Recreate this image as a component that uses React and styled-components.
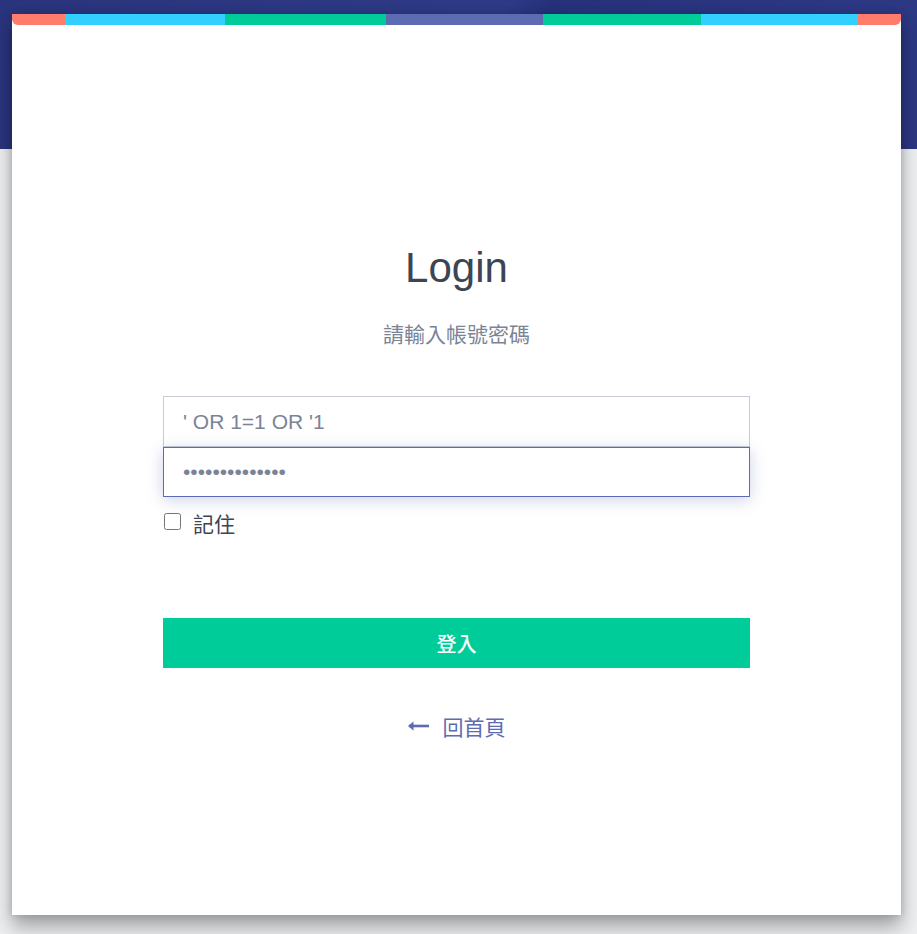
import React, { useState } from "react";
import styled, { createGlobalStyle } from "styled-components";

const GlobalStyle = createGlobalStyle`
  html, body {
    margin: 0;
    padding: 0;
    background: #eeeff1;
    font-family: "Liberation Sans", "Noto Sans CJK TC", Arial, sans-serif;
  }
`;

const Page = styled.div`
  position: relative;
  min-height: 934px;
  padding: 14px 16px 19px 12px;
  box-sizing: border-box;
  background:
    linear-gradient(
      to bottom,
      transparent 149px,
      #eeeff1 149px
    ),
    linear-gradient(
      120deg,
      #2a347c 0%,
      #2e3a86 35%,
      #27317a 38%,
      #2d3884 60%,
      #29337d 100%
    );
`;

const Card = styled.div`
  width: 889px;
  height: 901px;
  background: #fff;
  box-shadow: 0 12px 18px rgba(0, 0, 0, 0.32), 0 0 8px rgba(0, 0, 0, 0.15);
  display: flex;
  flex-direction: column;
  align-items: center;
`;

const ColorBar = styled.div`
  width: 100%;
  height: 11px;
  display: flex;
  border-radius: 0 0 6px 6px;
  overflow: hidden;
`;

const Segment = styled.div`
  width: ${(p) => p.w}px;
  background: ${(p) => p.color};
`;

const Title = styled.h1`
  margin: 220px 0 0;
  font-size: 42px;
  line-height: 46px;
  font-weight: 400;
  color: #3d4454;
`;

const Subtitle = styled.p`
  margin: 28px 0 0;
  font-family: "Noto Sans CJK TC", sans-serif;
  font-size: 21px;
  line-height: 28px;
  color: #7a8496;
`;

const Form = styled.form`
  width: 587px;
  margin-top: 49px;
  display: flex;
  flex-direction: column;
`;

const Input = styled.input`
  box-sizing: border-box;
  width: 100%;
  height: ${(p) => (p.focused ? 50 : 51)}px;
  padding: 0 19px;
  font-family: "Liberation Sans", Arial, sans-serif;
  font-size: 21px;
  color: #7a8496;
  background: #fff;
  outline: none;
  border: 1px solid ${(p) => (p.focused ? "#5d6bb3" : "#c7cbd3")};
  box-shadow: ${(p) =>
    p.focused ? "0 3px 16px rgba(93, 107, 179, 0.3)" : "none"};
  position: relative;
  z-index: ${(p) => (p.focused ? 1 : 0)};
`;

const RememberRow = styled.label`
  display: flex;
  align-items: center;
  gap: 12px;
  margin-top: 11px;
  font-family: "Noto Sans CJK TC", sans-serif;
  font-size: 21px;
  color: #3d4454;
`;

const CheckBox = styled.input`
  margin: 0 0 4px 1px;
  width: 17px;
  height: 17px;
`;

const SubmitButton = styled.button`
  margin-top: 80px;
  height: 50px;
  border: none;
  background: #00cc99;
  color: #fff;
  font-family: "Noto Sans CJK TC", sans-serif;
  font-size: 20px;
  font-weight: 500;
  cursor: pointer;
`;

const BackLink = styled.a`
  margin-top: 43px;
  display: flex;
  align-items: center;
  gap: 14px;
  color: #5d6bb3;
  text-decoration: none;
  font-family: "Noto Sans CJK TC", sans-serif;
  font-size: 21px;
`;

const segments = [
  { w: 53, color: "#ff7b6b" },
  { w: 160, color: "#33d0ff" },
  { w: 161, color: "#00cc99" },
  { w: 157, color: "#5d6bb3" },
  { w: 158, color: "#00cc99" },
  { w: 157, color: "#33d0ff" },
  { w: 43, color: "#ff7b6b" },
];

const App = () => {
  const [account, setAccount] = useState("' OR 1=1 OR '1");
  const [password, setPassword] = useState("aaaaaaaaaaaaaa");
  const [remember, setRemember] = useState(false);

  return (
    <>
      <GlobalStyle />
      <Page>
        <Card>
          <ColorBar>
            {segments.map((s, i) => (
              <Segment key={i} w={s.w} color={s.color} />
            ))}
          </ColorBar>
          <Title>Login</Title>
          <Subtitle>請輸入帳號密碼</Subtitle>
          <Form onSubmit={(e) => e.preventDefault()}>
            <Input
              type="text"
              value={account}
              onChange={(e) => setAccount(e.target.value)}
            />
            <Input
              type="password"
              focused
              value={password}
              onChange={(e) => setPassword(e.target.value)}
            />
            <RememberRow>
              <CheckBox
                type="checkbox"
                checked={remember}
                onChange={(e) => setRemember(e.target.checked)}
              />
              記住
            </RememberRow>
            <SubmitButton type="submit">登入</SubmitButton>
          </Form>
          <BackLink href="#">
            <svg width="21" height="10" viewBox="0 0 21 10">
              <path d="M1 5h20" stroke="#5d6bb3" strokeWidth="2.6" />
              <path d="M0 5l5.5-4.5v9z" fill="#5d6bb3" />
            </svg>
            回首頁
          </BackLink>
        </Card>
      </Page>
    </>
  );
};

export default App;
